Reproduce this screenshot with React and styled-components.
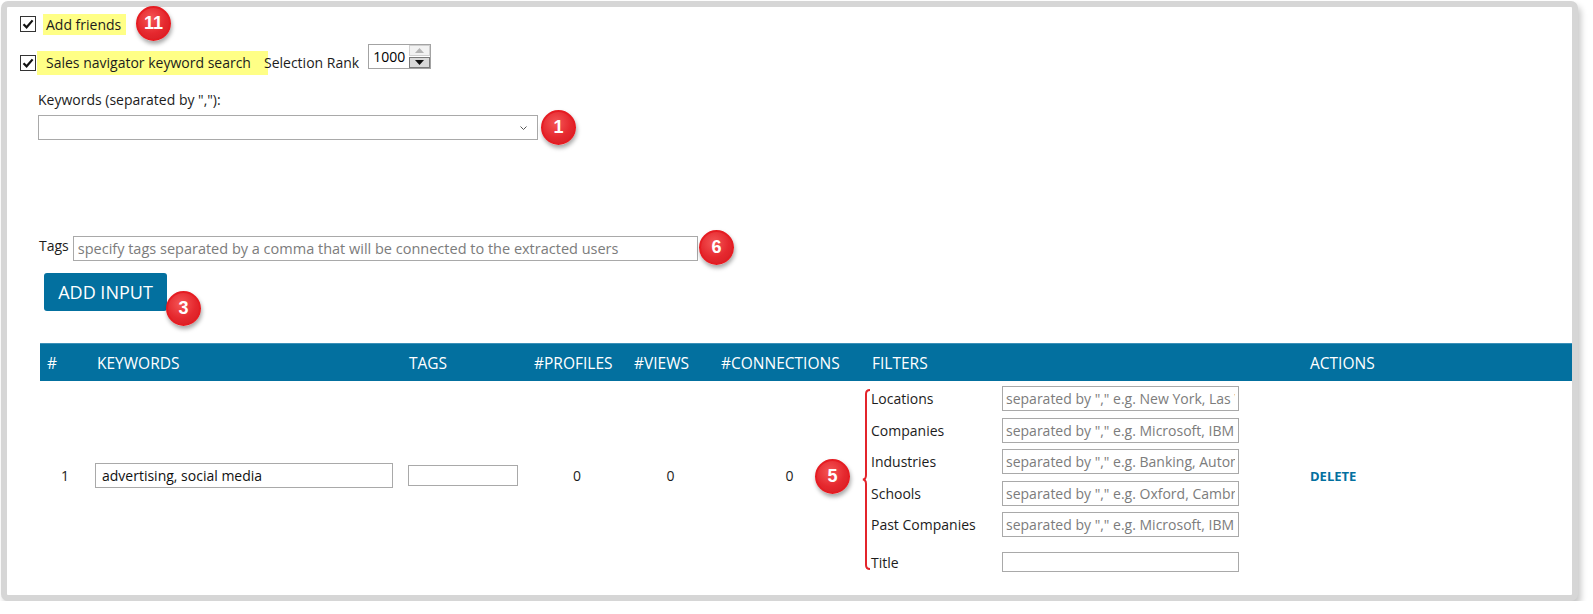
import React from "react";
import styled, { createGlobalStyle } from "styled-components";

const GlobalStyle = createGlobalStyle`
  html, body {
    margin: 0;
    padding: 0;
    background: #fff;
  }
  body {
    font-family: "Open Sans", "Noto Sans", Arial, sans-serif;
    font-size: 14px;
    color: #1c1c1c;
  }
  * {
    box-sizing: border-box;
  }
`;

const Frame = styled.div`
  margin: 1px 0 0 1px;
  width: 1577px;
  border: 6px solid #d6d6d6;
  border-radius: 7px;
  background: #fff;
  box-shadow: 3px 5px 6px rgba(0, 0, 0, 0.22);
  padding: 5px 0 0 13px;
`;

const OptionRow = styled.div`
  position: relative;
  display: flex;
  align-items: ${({ $align }) => $align || "center"};
  height: ${({ $h }) => $h}px;
  margin-top: ${({ $mt }) => $mt || 0}px;
`;

const CheckBox = styled.span`
  flex: none;
  width: 16px;
  height: 16px;
  margin-top: ${({ $mt }) => $mt || 0}px;
  border: 1px solid #333;
  background: #fff;
  display: inline-flex;
  align-items: center;
  justify-content: center;
`;

const Highlight = styled.span`
  background: #ffff86;
  height: ${({ $h }) => $h}px;
  line-height: ${({ $h }) => $h}px;
  padding: 0 ${({ $pr }) => $pr}px 0 ${({ $pl }) => $pl}px;
  margin: ${({ $mt }) => $mt || 0}px 0 0 ${({ $ml }) => $ml || 0}px;
  white-space: nowrap;
`;

const InlineLabel = styled.span`
  line-height: 24px;
  margin: 7px 0 0 -4px;
  white-space: nowrap;
`;

const NumberBox = styled.div`
  display: flex;
  align-items: center;
  width: 63px;
  height: 25px;
  margin-left: 9px;
  border: 1px solid #a3a3a3;
  background: #fff;
  padding: 0 1px 0 4px;
`;

const NumberValue = styled.input`
  width: 36px;
  border: none;
  padding: 0;
  font: 14px "Open Sans", Arial, sans-serif;
  color: #000;
  outline: none;
  background: transparent;
`;

const Spinner = styled.div`
  display: flex;
  flex-direction: column;
  gap: 1px;
  margin-left: auto;
`;

const SpinButton = styled.span`
  width: 21px;
  height: 11px;
  display: flex;
  align-items: center;
  justify-content: center;
  background: ${({ $active }) => ($active ? "#d9d9d9" : "#f2f2f2")};
  border: 1px solid ${({ $active }) => ($active ? "#7a7a7a" : "#d0d0d0")};
`;

const Badge = styled.span`
  position: absolute;
  left: ${({ $x }) => $x}px;
  top: ${({ $y }) => $y}px;
  width: 35px;
  height: 35px;
  border-radius: 50%;
  background: radial-gradient(circle at 42% 35%, #f45656 0%, #e5282e 55%, #d21d23 100%);
  border: 2px solid #e51c22;
  box-shadow: 1px 3px 4px rgba(0, 0, 0, 0.35);
  color: #fff;
  font: bold 18px "Liberation Sans", Arial, sans-serif;
  display: flex;
  align-items: center;
  justify-content: center;
  z-index: 2;
`;

const KeywordBlock = styled.div`
  margin: 15px 0 0 18px;
`;

const FieldLabel = styled.div`
  line-height: 19px;
  white-space: nowrap;
`;

const SelectBox = styled.div`
  position: relative;
  display: flex;
  align-items: center;
  justify-content: flex-end;
  width: 500px;
  height: 25px;
  margin-top: 6px;
  padding-right: 10px;
  border: 1px solid #a9a9a9;
  background: #fff;
`;

const TagsRow = styled.div`
  position: relative;
  display: flex;
  align-items: flex-start;
  gap: 4px;
  margin: 96px 0 0 19px;
`;

const TextInput = styled.input`
  width: ${({ $w }) => $w}px;
  height: ${({ $h }) => $h || 25}px;
  margin-top: ${({ $mt }) => $mt || 0}px;
  border: 1px solid #a9a9a9;
  padding: 0 ${({ $px }) => ($px === undefined ? 4 : $px)}px;
  font: ${({ $fs }) => $fs || 14}px "Open Sans", Arial, sans-serif;
  color: #111;
  background: #fff;
  outline: none;

  &::placeholder {
    color: #7c7c7c;
  }
`;

const ButtonWrap = styled.div`
  position: relative;
  width: fit-content;
  margin: 12px 0 0 24px;
`;

const PrimaryButton = styled.button`
  width: 123px;
  height: 38px;
  border: none;
  border-radius: 3px;
  background: #03709f;
  color: #fff;
  font: 18px "Open Sans", Arial, sans-serif;
  cursor: pointer;
`;

const columns = "50px 312px 125px 100px 87px 151px 438px 1fr";

const Table = styled.div`
  margin: 32px 0 0 20px;
`;

const HeadRow = styled.div`
  display: grid;
  grid-template-columns: ${columns};
  align-items: center;
  height: 38px;
  background: #03709f;
  border-top: 1px solid #3b90b8;
  color: #fff;
  font-size: 15.5px;
`;

const HeadCell = styled.div`
  padding-left: 7px;
  text-transform: uppercase;
  white-space: nowrap;
`;

const BodyRow = styled.div`
  display: grid;
  grid-template-columns: ${columns};
  align-items: center;
  padding: 5px 0 23px;
`;

const Cell = styled.div`
  position: relative;
  text-align: ${({ $align }) => $align || "left"};
  padding-left: ${({ $pl }) => $pl || 0}px;
  margin-bottom: ${({ $mb }) => $mb || 0}px;
`;

const FilterGrid = styled.div`
  display: grid;
  grid-template-columns: 131px 237px;
  row-gap: 6.5px;
  align-items: center;
`;

const FilterLabel = styled.div`
  margin-top: ${({ $mt }) => $mt || 0}px;
  white-space: nowrap;
`;

const Brace = styled.svg`
  position: absolute;
  left: -3px;
  top: 3px;
`;

const DeleteLink = styled.a`
  color: #03709f;
  font-weight: 700;
  font-size: 13px;
  text-decoration: none;
  cursor: pointer;
`;

const Tick = () => (
  <svg width="14" height="14" viewBox="0 0 14 14">
    <path d="M2.5 7.2 L5.6 10.3 L11.6 3.4" fill="none" stroke="#111" strokeWidth="2.2" />
  </svg>
);

const filters = [
  { label: "Locations", placeholder: 'separated by "," e.g. New York, Las Vegas' },
  { label: "Companies", placeholder: 'separated by "," e.g. Microsoft, IBM' },
  { label: "Industries", placeholder: 'separated by "," e.g. Banking, Automotive' },
  { label: "Schools", placeholder: 'separated by "," e.g. Oxford, Cambridge' },
  { label: "Past Companies", placeholder: 'separated by "," e.g. Microsoft, IBM' },
];

const headers = ["#", "Keywords", "Tags", "#Profiles", "#Views", "#Connections", "Filters", "Actions"];

const App = () => {
  return (
    <>
      <GlobalStyle />
      <Frame>
        <OptionRow $h={24}>
          <CheckBox><Tick /></CheckBox>
          <Highlight $h={21} $pl={3} $pr={5} $ml={7}>Add friends</Highlight>
          <Badge $x={116} $y={-6}>11</Badge>
        </OptionRow>

        <OptionRow $h={31} $mt={8} $align="flex-start">
          <CheckBox $mt={11}><Tick /></CheckBox>
          <Highlight $h={24} $pl={9} $pr={17} $mt={7} $ml={1}>Sales navigator keyword search</Highlight>
          <InlineLabel>Selection Rank</InlineLabel>
          <NumberBox>
            <NumberValue type="text" value="1000" readOnly />
            <Spinner>
              <SpinButton>
                <svg width="9" height="5" viewBox="0 0 9 5"><path d="M0 5 L4.5 0 L9 5 Z" fill="#b4b4b4" /></svg>
              </SpinButton>
              <SpinButton $active>
                <svg width="9" height="5" viewBox="0 0 9 5"><path d="M0 0 L4.5 5 L9 0 Z" fill="#111" /></svg>
              </SpinButton>
            </Spinner>
          </NumberBox>
        </OptionRow>

        <KeywordBlock>
          <FieldLabel>Keywords (separated by ","):</FieldLabel>
          <SelectBox>
            <svg width="7" height="4" viewBox="0 0 7 4">
              <path d="M0.5 0.5 L3.5 3.5 L6.5 0.5" fill="none" stroke="#555" strokeWidth="1" />
            </svg>
            <Badge $x={502} $y={-6}>1</Badge>
          </SelectBox>
        </KeywordBlock>

        <TagsRow>
          <FieldLabel>Tags</FieldLabel>
          <TextInput
            $w={625}
            $fs={14.5}
            placeholder="specify tags separated by a comma that will be connected to the extracted users"
          />
          <Badge $x={660} $y={-6}>6</Badge>
        </TagsRow>

        <ButtonWrap>
          <PrimaryButton>ADD INPUT</PrimaryButton>
          <Badge $x={122} $y={18}>3</Badge>
        </ButtonWrap>

        <Table>
          <HeadRow>
            {headers.map((h) => (
              <HeadCell key={h}>{h}</HeadCell>
            ))}
          </HeadRow>
          <BodyRow>
            <Cell $align="center" $mb={7}>1</Cell>
            <Cell $pl={5} $mb={7}>
              <TextInput $w={298} $px={6} defaultValue="advertising, social media" />
            </Cell>
            <Cell $pl={6} $mb={7}>
              <TextInput $w={110} $h={21} />
            </Cell>
            <Cell $align="center" $mb={7}>0</Cell>
            <Cell $align="center" $mb={7}>0</Cell>
            <Cell $align="center" $mb={7}>0</Cell>
            <Cell $pl={6}>
              <Badge $x={-50} $y={73}>5</Badge>
              <Brace width="10" height="181" viewBox="0 0 10 181">
                <path
                  d="M8 1 Q4 1 4 5 L4 86 Q4 90.5 0.8 90.5 Q4 90.5 4 95 L4 176 Q4 180 8 180"
                  fill="none"
                  stroke="#e3242b"
                  strokeWidth="2"
                />
              </Brace>
              <FilterGrid>
                {filters.map((f) => (
                  <React.Fragment key={f.label}>
                    <FilterLabel>{f.label}</FilterLabel>
                    <TextInput $w={237} $px={3} placeholder={f.placeholder} />
                  </React.Fragment>
                ))}
                <FilterLabel $mt={8.5}>Title</FilterLabel>
                <TextInput $w={237} $h={20} $mt={8.5} />
              </FilterGrid>
            </Cell>
            <Cell $pl={7} $mb={7}>
              <DeleteLink>DELETE</DeleteLink>
            </Cell>
          </BodyRow>
        </Table>
      </Frame>
    </>
  );
};

export default App;
